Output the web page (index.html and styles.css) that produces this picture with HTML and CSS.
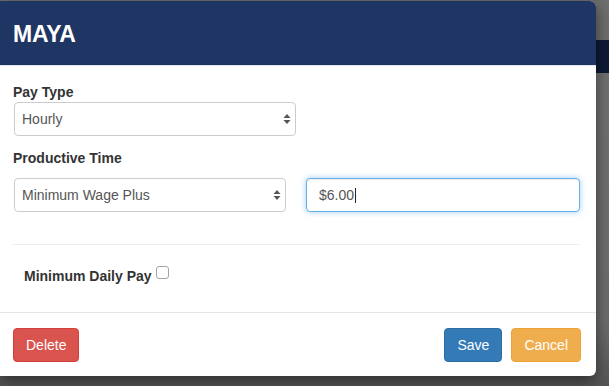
FILE: index.html
```html
<!DOCTYPE html>
<html lang="en">
<head>
    <meta charset="UTF-8">
    <meta name="viewport" content="width=device-width, initial-scale=1.0">
    <title>Maya</title>
    <link rel="stylesheet" href="styles.css">
</head>
<body>
    <div class="page">
        <div class="page-top"></div>
        <div class="page-nav"></div>
        <div class="page-body"></div>
    </div>

    <div class="modal">
        <div class="modal-header">
            <h4 class="modal-title">MAYA</h4>
        </div>
        <div class="modal-body">
            <label class="field-label">Pay Type</label>
            <div class="select-wrap short">
                <select class="form-control">
                    <option>Hourly</option>
                </select>
            </div>

            <label class="field-label second">Productive Time</label>
            <div class="row">
                <div class="select-wrap">
                    <select class="form-control">
                        <option>Minimum Wage Plus</option>
                    </select>
                </div>
                <div class="input-wrap">
                    <div class="form-control focused">$6.00<span class="caret"></span></div>
                </div>
            </div>

            <hr class="divider">

            <div class="check-row">
                <span class="check-label">Minimum Daily Pay</span>
                <span class="checkbox"></span>
            </div>
        </div>
        <div class="modal-footer">
            <button class="btn btn-danger">Delete</button>
            <div class="btn-group">
                <button class="btn btn-primary">Save</button>
                <button class="btn btn-warning">Cancel</button>
            </div>
        </div>
    </div>
</body>
</html>
```

FILE: styles.css
```css
* {
    box-sizing: border-box;
}
body {
    margin: 0;
    font-family: "Liberation Sans", Arial, sans-serif;
    font-size: 14px;
    color: #333;
    background-color: #585858;
    overflow: hidden;
}
.page {
    height: 386px;
    display: flex;
    flex-direction: column;
}
.page-top {
    height: 40px;
    background-color: #6e6e6e;
}
.page-nav {
    height: 33px;
    background-color: #0e1a35;
}
.page-body {
    flex: 1;
    background: linear-gradient(to bottom, #717171 0%, #6c6c6c 80%, #555 100%);
}
.modal {
    position: absolute;
    top: 1px;
    left: 0;
    width: 596px;
    height: 375px;
    background-color: #fff;
    border-radius: 0 6px 6px 0;
    box-shadow: 0 5px 15px rgba(0, 0, 0, 0.5);
    display: flex;
    flex-direction: column;
    overflow: hidden;
}
.modal-header {
    height: 65px;
    background-color: #1f3564;
    padding: 0 13px;
    display: flex;
    align-items: center;
    border-bottom: 1px solid #e5e5e5;
}
.modal-title {
    margin: 0;
    color: #fff;
    font-size: 23px;
    font-weight: bold;
    letter-spacing: -0.2px;
    padding-top: 2px;
}
.modal-body {
    padding: 17px 16px 0 13px;
    height: 246px;
}
.field-label {
    display: block;
    font-weight: bold;
    font-size: 14px;
    line-height: 19px;
}
.field-label.second {
    margin-top: 13px;
    margin-bottom: 10px;
}
.select-wrap {
    width: 272px;
    margin-left: 1px;
}
.select-wrap.short {
    width: 282px;
}
.row {
    display: flex;
    gap: 20px;
}
.input-wrap {
    flex: 1;
}
.form-control {
    display: block;
    width: 100%;
    height: 34px;
    padding: 0 7px;
    font-family: "Liberation Sans", Arial, sans-serif;
    font-size: 14px;
    color: #555;
    background-color: #fff;
    border: 1px solid #ccc;
    border-radius: 4px;
    outline: none;
}
select.form-control {
    appearance: none;
    -webkit-appearance: none;
    background-image: url("data:image/svg+xml;utf8,<svg xmlns='http://www.w3.org/2000/svg' width='8' height='12' viewBox='0 0 8 12'><path d='M4 1 L7.5 5 H0.5 Z M4 11 L7.5 7 H0.5 Z' fill='%23555'/></svg>");
    background-repeat: no-repeat;
    background-position: right 4px center;
    background-size: 8px 12px;
}
.form-control.focused {
    display: flex;
    align-items: center;
    border-color: #66afe9;
    box-shadow: inset 0 1px 1px rgba(0, 0, 0, 0.075), 0 0 6px rgba(102, 175, 233, 0.6);
    padding-left: 12px;
}
.caret {
    width: 1px;
    height: 15px;
    margin-left: 1px;
    background-color: #222;
}
.divider {
    margin: 32px 0 0 0;
    border: 0;
    border-top: 1px solid #eee;
}
.check-row {
    display: flex;
    align-items: flex-start;
    padding-left: 11px;
    margin-top: 22px;
}
.check-label {
    font-weight: bold;
    font-size: 14px;
    line-height: 19px;
}
.checkbox {
    width: 13px;
    height: 13px;
    margin-left: 4px;
    margin-top: -1px;
    border: 1px solid #a5a5a5;
    border-radius: 3px;
    background-color: #fff;
}
.modal-footer {
    border-top: 1px solid #e5e5e5;
    padding: 15px 15px 0 13px;
    display: flex;
    justify-content: space-between;
    align-items: flex-start;
    flex: 1;
}
.btn-group {
    display: flex;
    gap: 9px;
}
.btn {
    height: 34px;
    padding: 0 12px;
    font-family: "Liberation Sans", Arial, sans-serif;
    font-size: 14px;
    color: #fff;
    border: 1px solid transparent;
    border-radius: 4px;
    cursor: pointer;
}
.btn-danger {
    background-color: #d9534f;
    border-color: #d43f3a;
}
.btn-primary {
    background-color: #337ab7;
    border-color: #2e6da4;
}
.btn-warning {
    background-color: #f0ad4e;
    border-color: #eea236;
}
```
